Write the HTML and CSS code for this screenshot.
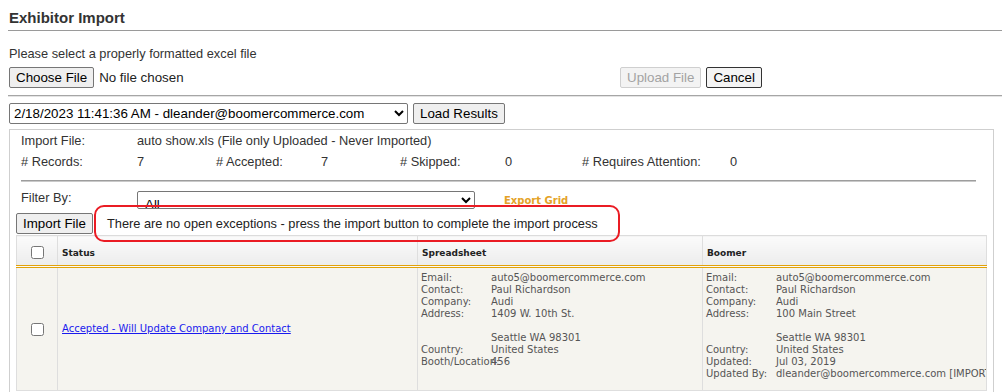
FILE: index.html
```html
<!DOCTYPE html>
<html lang="en">
<head>
<meta charset="utf-8">
<title>Exhibitor Import</title>
<link rel="stylesheet" href="styles.css">
</head>
<body>
<h1 class="title">Exhibitor Import</h1>
<p class="hint">Please select a properly formatted excel file</p>
<div class="upload-row">
  <div class="file-pick">
    <button class="btn" type="button">Choose File</button>
    <span class="file-name">No file chosen</span>
  </div>
  <button class="btn" type="button" disabled>Upload File</button>
  <button class="btn btn-focus" type="button">Cancel</button>
</div>
<div class="sep"></div>
<div class="load-row">
  <select class="sel sel-results">
    <option>2/18/2023 11:41:36 AM - dleander@boomercommerce.com</option>
  </select>
  <button class="btn" type="button">Load Results</button>
</div>
<section class="panel">
  <div class="info">
    <span>Import File:</span>
    <span class="info-wide">auto show.xls (File only Uploaded - Never Imported)</span>
    <span># Records:</span><span>7</span>
    <span># Accepted:</span><span>7</span>
    <span># Skipped:</span><span>0</span>
    <span># Requires Attention:</span><span>0</span>
  </div>
  <div class="panel-rule"></div>
  <div class="filter-row">
    <span class="filter-label">Filter By:</span>
    <select class="sel sel-filter"><option>All</option></select>
    <a class="export" href="#">Export Grid</a>
  </div>
  <div class="import-row">
    <button class="btn" type="button">Import File</button>
    <span class="msg">There are no open exceptions - press the import button to complete the import process<span class="msg-ring"></span></span>
  </div>
  <table class="grid">
    <colgroup>
      <col class="c-check"><col class="c-status"><col class="c-sheet"><col class="c-boomer">
    </colgroup>
    <thead>
      <tr>
        <th class="th-check"><input type="checkbox"></th>
        <th>Status</th>
        <th>Spreadsheet</th>
        <th>Boomer</th>
      </tr>
    </thead>
    <tbody>
      <tr>
        <td class="td-check"><input type="checkbox"></td>
        <td class="td-status"><a class="status-link" href="#">Accepted - Will Update Company and Contact</a></td>
        <td class="td-rec">
          <dl class="rec">
            <dt>Email:</dt><dd>auto5@boomercommerce.com</dd>
            <dt>Contact:</dt><dd>Paul Richardson</dd>
            <dt>Company:</dt><dd>Audi</dd>
            <dt>Address:</dt><dd>1409 W. 10th St.<br><br>Seattle WA 98301</dd>
            <dt>Country:</dt><dd>United States</dd>
            <dt>Booth/Location:</dt><dd>456</dd>
          </dl>
        </td>
        <td class="td-rec">
          <dl class="rec">
            <dt>Email:</dt><dd>auto5@boomercommerce.com</dd>
            <dt>Contact:</dt><dd>Paul Richardson</dd>
            <dt>Company:</dt><dd>Audi</dd>
            <dt>Address:</dt><dd>100 Main Street<br><br>Seattle WA 98301</dd>
            <dt>Country:</dt><dd>United States</dd>
            <dt>Updated:</dt><dd>Jul 03, 2019</dd>
            <dt>Updated By:</dt><dd>dleander@boomercommerce.com [IMPORT]</dd>
          </dl>
        </td>
      </tr>
    </tbody>
  </table>
</section>
</body>
</html>
```
FILE: styles.css
```css
* { box-sizing: border-box; }

body {
  margin: 0;
  padding: 0 0 0 8px;
  font-family: "Liberation Sans", Arial, sans-serif;
  font-size: 13px;
  color: #333;
  background: #fff;
}

.title {
  margin: 0;
  padding: 9px 0 3px 1px;
  font-size: 15px;
  line-height: 18px;
  font-weight: bold;
  color: #333;
  border-bottom: 1px solid #9a9a9a;
}

.hint {
  margin: 15px 0 0 1px;
  line-height: 16px;
  font-size: 12.8px;
}

.btn {
  height: 21px;
  padding: 0 6px;
  font-family: "Liberation Sans", Arial, sans-serif;
  font-size: 13.33px;
  color: #000;
  background: #efefef;
  border: 1px solid #767676;
  border-radius: 2px;
}
.btn:disabled {
  color: #a3a3a3;
  background: #f3f3f3;
  border-color: #cfcfcf;
}
.btn-focus {
  border-color: #333;
  background: #f4f4f4;
}

.upload-row {
  margin: 5px 0 0 1px;
  display: flex;
  align-items: center;
  gap: 5px;
  height: 21px;
}
.file-pick {
  width: 606px;
  display: flex;
  align-items: center;
  gap: 5px;
}
.file-name {
  font-size: 13.33px;
  color: #222;
}

.sep {
  margin-top: 7px;
  border-top: 1px solid #a6a6a6;
  border-bottom: 1px solid #e4e4e4;
}

.load-row {
  margin: 6px 0 0 1px;
  display: flex;
  align-items: center;
  gap: 5px;
  height: 21px;
}
.sel {
  font-family: "Liberation Sans", Arial, sans-serif;
  font-size: 13.33px;
  color: #000;
  background: #fff;
  border: 1px solid #767676;
  border-radius: 2px;
}
.sel-results {
  width: 399px;
  height: 21px;
}

.panel {
  margin: 5px 0 0 1px;
  width: 985px;
  border: 1px solid #cfcfcf;
  border-bottom: none;
  padding: 0 6px 20px;
}

.info {
  margin-left: 5px;
  display: grid;
  grid-template-columns: 116px 79px 105px 79px 105px 77px 148px 1fr;
  line-height: 21px;
  font-size: 12.8px;
  color: #333;
}
.info-wide { grid-column: 2 / 9; }

.panel-rule {
  margin: 8px 11px 0 5px;
  border-top: 1px solid #9d9d9d;
  border-bottom: 1px solid #c9c9c9;
}

.filter-row {
  margin: 9px 0 0 5px;
  height: 18px;
  display: flex;
  align-items: flex-start;
}
.filter-label {
  width: 116px;
  line-height: 13px;
  font-size: 12.8px;
}
.sel-filter {
  width: 338px;
  height: 18px;
  padding: 4px 0 0 3px;
  line-height: 14px;
}
.export {
  margin: 3px 0 0 29px;
  font-family: "DejaVu Sans", Verdana, sans-serif;
  font-size: 10px;
  font-weight: bold;
  color: #e4a227;
  text-decoration: none;
  line-height: 14px;
}

.import-row {
  margin-top: 4px;
  height: 21px;
  display: flex;
  align-items: center;
}
.msg {
  position: relative;
  margin-left: 14px;
  line-height: 21px;
  font-size: 12.8px;
  color: #222;
}
.msg-ring {
  position: absolute;
  left: -13px;
  right: -22px;
  top: -8px;
  bottom: -8px;
  border: 2px solid #ea1c24;
  border-radius: 10px;
  z-index: 2;
}

.grid {
  margin-top: 1px;
  width: 970px;
  table-layout: fixed;
  border-collapse: collapse;
  border: 1px solid #dcdcdc;
  font-family: "DejaVu Sans", Verdana, sans-serif;
}
.c-check { width: 41px; }
.c-status { width: 360px; }
.c-sheet { width: 285px; }
.c-boomer { width: 284px; }

.grid th {
  height: 31px;
  padding: 4px 4px 0;
  text-align: left;
  font-size: 9px;
  font-weight: bold;
  color: #222;
  background: linear-gradient(#fbfbfb, #ececec);
  border-left: 1px solid #dedede;
  border-right: 1px solid #dedede;
  border-bottom: 3px double #e2a208;
}
.grid .th-check { text-align: center; padding: 3px 0 0; }

.grid input[type="checkbox"] {
  margin: 0;
  width: 13px;
  height: 13px;
  vertical-align: middle;
}

.grid td {
  background: #f5f4ef;
  border: 1px solid #dedede;
  vertical-align: top;
  padding: 4px 3px 10px;
  font-size: 10px;
  line-height: 12px;
  color: #555;
}
.grid .td-check { text-align: center; vertical-align: middle; padding: 0; }
.grid .td-status { vertical-align: middle; padding: 0 4px; }
.status-link {
  color: #1a1aee;
  text-decoration: underline;
  font-size: 10px;
}
.td-rec { overflow: hidden; white-space: nowrap; }

.rec {
  margin: 0;
  display: grid;
  grid-template-columns: 70px 1fr;
}
.rec dt { margin: 0; white-space: nowrap; }
.rec dd { margin: 0; white-space: nowrap; }
```
